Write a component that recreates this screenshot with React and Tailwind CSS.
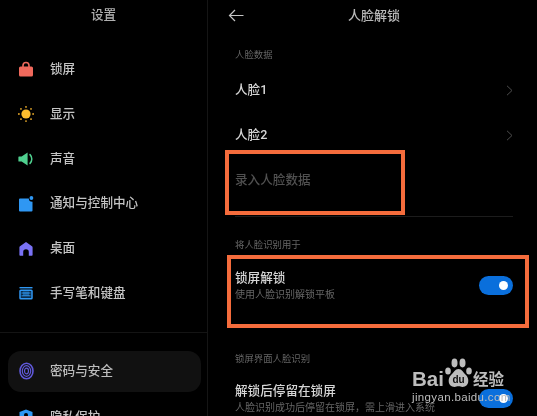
import React from "react";

const font = { fontFamily: 'Roboto, "Noto Sans CJK SC", "Noto Sans", sans-serif' };

const Lock = () => (
  <svg width="16" height="16" viewBox="0 0 16 16"><path d="M5 7V4.500a3 3 0 0 1 6 0V7" fill="none" stroke="#f0695c" strokeWidth="1.6" /><rect x="1" y="5.500" width="14" height="10" rx="1.600" fill="#f0695c" /></svg>
);
const Sun = () => (
  <svg width="16" height="16" viewBox="0 0 16 16"><circle cx="8" cy="8" r="4.600" fill="#fdbd2e" />{[0,45,90,135,180,225,270,315].map((a)=><circle key={a} cx="8" cy="0.900" r="0.900" fill="#e8a92a" transform={`rotate(${a} 8 8)`} />)}</svg>
);
const Sound = () => (
  <svg width="16" height="16" viewBox="0 0 16 16"><path d="M1 5.500h2.600L9.600 1.400v13.200L3.600 10.500H1a.6.6 0 0 1-.6-.6V6.100a.6.6 0 0 1 .6-.6z" fill="#4fd08f" /><path d="M12 3.600c2.400 2.400 2.400 6.400 0 8.800" fill="none" stroke="#4fd08f" strokeWidth="1.500" strokeLinecap="round" /></svg>
);
const Notify = () => (
  <svg width="16" height="16" viewBox="0 0 16 16"><path d="M2 2.500h8.800a3.500 3.500 0 0 0 3.700 3.300V14.500a1 1 0 0 1-1 1H2a1 1 0 0 1-1-1V3.500a1 1 0 0 1 1-1z" fill="#2f97f3" /><circle cx="13.400" cy="2" r="1.900" fill="#2f97f3" /></svg>
);
const Home = () => (
  <svg width="16" height="16" viewBox="0 0 16 16"><path d="M8 1 14 5.200a1.400 1.400 0 0 1 .6 1.200V14a.8.8 0 0 1-.8.8h-3V11a2.800 2.800 0 0 0-5.600 0v3.800h-3a.8.8 0 0 1-.8-.8V6.400A1.400 1.400 0 0 1 2 5.200z" fill="#7a72f5" /></svg>
);
const Keyboard = () => (
  <svg width="16" height="16" viewBox="0 0 16 16"><rect x="1.500" y="2" width="13" height="1.400" fill="#2f97f3" /><rect x="2" y="5.200" width="12" height="8.600" rx="0.800" fill="#0c2c4a" stroke="#2f97f3" strokeWidth="1.500" /><path d="M3.500 8h9M3.500 10.800h9M6 6.500v4.500M8 6.500v4.500M10 6.500v4.500" stroke="#2f97f3" strokeWidth="0.900" /></svg>
);
const Finger = () => (
  <svg width="15" height="18" viewBox="0 0 15 18" fill="none" stroke="#5f58d8"><ellipse cx="7.500" cy="9" rx="6.500" ry="7.800" strokeWidth="1.600" /><ellipse cx="7.500" cy="9" rx="4.200" ry="5.300" strokeWidth="1.200" /><ellipse cx="7.500" cy="9" rx="2" ry="2.800" strokeWidth="1.200" /></svg>
);
const Shield = () => (
  <svg width="16" height="16" viewBox="0 0 16 16"><path d="M8 0.500 14.500 3v6c0 3.500-3 6-6.500 6.500C4.500 15 1.500 12.500 1.500 9V3z" fill="#2f97f3" /><circle cx="8" cy="6" r="2" fill="#000" /></svg>
);

const Row = ({ icon, label, extra = "" }) => (
  <div className={`flex h-[44.8px] items-center pl-[18px] ${extra}`}>
    <span className="flex w-[16px] justify-center">{icon}</span>
    <span className="ml-[16px] text-[12.6px] font-medium text-[#c4c4c4]">{label}</span>
  </div>
);

const Toggle = () => (
  <div className="flex h-[19px] w-[34px] items-center justify-end rounded-full bg-[#0a6fdc] pr-[5px]">
    <span className="h-[9px] w-[9px] rounded-full bg-white" />
  </div>
);

const Chevron = () => (
  <svg width="7" height="11" viewBox="0 0 7 11" fill="none" stroke="#4c4c4c" strokeWidth="1"><path d="M1 .8 6 5.500 1 10.200" /></svg>
);

const Section = ({ children, className }) => (
  <div className={`text-[9.400px] leading-[14px] text-[#666] ${className}`}>{children}</div>
);

const Face = ({ label }) => (
  <div className="flex h-[45px] items-center justify-between">
    <span className="text-[12.600px] font-medium text-[#d6d6d6]">{label}</span>
    <Chevron />
  </div>
);

export default function App() {
  return (
    <div className="relative flex h-[416px] w-[537px] overflow-hidden bg-black blur-[0.35px]" style={font}>
      <aside className="w-[208px] shrink-0 border-r border-[#151515]">
        <div className="flex h-[47px] items-start justify-center pt-[6px] text-[12.6px] font-medium leading-[18px] text-[#b0b0b0]">设置</div>
        <div>
          <Row icon={<Lock />} label="锁屏" />
          <Row icon={<Sun />} label="显示" />
          <Row icon={<Sound />} label="声音" />
          <Row icon={<Notify />} label="通知与控制中心" />
          <Row icon={<Home />} label="桌面" />
          <Row icon={<Keyboard />} label="手写笔和键盘" />
        </div>
        <div className="mt-[16px] h-px w-full bg-[#141414]" />
        <div className="ml-[8px] mr-[6px] mt-[18px] flex h-[41px] items-center rounded-[13px] bg-[#111111] pl-[11px]">
          <Finger />
          <span className="ml-[16px] text-[12.6px] font-medium text-[#bdbdbd]">密码与安全</span>
        </div>
        <Row icon={<Shield />} label="隐私保护" extra="mt-[3px]" />
      </aside>

      <main className="min-w-0 flex-1 pl-[27px] pr-[24px]">
        <div className="relative flex h-[32px] items-center justify-center">
          <svg className="absolute left-[-7px] top-[9px]" width="16" height="13" viewBox="0 0 16 13" fill="none" stroke="#c4c4c4" strokeWidth="1.200"><path d="M15.500 6.500H1.500M7 1 1.500 6.500 7 12" /></svg>
          <span className="text-[13px] font-medium text-[#b8b8b8]">人脸解锁</span>
        </div>
        <Section className="mt-[16px]">人脸数据</Section>
        <div className="mt-[6px]">
          <Face label="人脸1" />
          <Face label="人脸2" />
        </div>
        <div className="flex h-[45px] items-center text-[12.600px] font-medium text-[#505050]">录入人脸数据</div>
        <div className="mt-[13px] h-px bg-[#1c1c1c]" />
        <Section className="mt-[21px]">将人脸识别用于</Section>
        <div className="mt-[17px] flex items-center justify-between">
          <div>
            <div className="text-[12.600px] font-medium leading-[18px] text-[#d6d6d6]">锁屏解锁</div>
            <div className="mt-[1px] text-[10px] leading-[14px] text-[#666]">使用人脸识别解锁平板</div>
          </div>
          <Toggle />
        </div>
        <Section className="mt-[50px]">锁屏界面人脸识别</Section>
        <div className="mt-[16px] flex items-center justify-between">
          <div>
            <div className="text-[12.600px] font-medium leading-[18px] text-[#d6d6d6]">解锁后停留在锁屏</div>
            <div className="mt-[1px] whitespace-nowrap text-[10px] leading-[14px] text-[#666]">人脸识别成功后停留在锁屏，需上滑进入系统</div>
          </div>
          <Toggle />
        </div>
      </main>

      <div className="absolute left-[225px] top-[150px] h-[65px] w-[180px] border-[4px] border-[#f56c3c]" />
      <div className="absolute left-[227px] top-[255px] h-[73px] w-[302px] border-[4px] border-[#f56c3c]" />

      <div className="absolute left-[412px] top-[358px] w-[100px] text-[#bdbdbd]" style={{ fontFamily: '"Liberation Sans", sans-serif' }}>
        <div className="flex h-[32px] items-start">
          <span className="mt-[11px] text-[20.500px] font-bold leading-[20px]">Bai</span>
          <svg className="shrink-0" width="29" height="31" viewBox="0 0 28 31" fill="#bdbdbd">
            <ellipse cx="3.500" cy="13" rx="2.800" ry="3.600" /><ellipse cx="10" cy="5" rx="3" ry="4.400" /><ellipse cx="18" cy="5" rx="3" ry="4.400" /><ellipse cx="24.500" cy="13" rx="2.800" ry="3.600" />
            <path d="M14 11c3.500 0 4.500 3.500 7.500 6 3.500 3 3.500 12-3.500 12-1.700 0-2.300-.7-4-.7s-2.300.7-4 .7c-7 0-7-9-3.500-12 3-2.500 4-6 7.500-6z" />
            <text x="14" y="25" textAnchor="middle" fontSize="10" fontWeight="700" fill="#111" fontFamily="Liberation Sans">du</text>
          </svg>
          <span className="mt-[14px] text-[15.500px] font-bold leading-[17px] whitespace-nowrap" style={font}>经验</span>
        </div>
        <div className="mt-[1px] whitespace-nowrap text-[11.500px] leading-[13px] tracking-[0.35px]">jingyan.baidu.com</div>
      </div>
    </div>
  );
}
